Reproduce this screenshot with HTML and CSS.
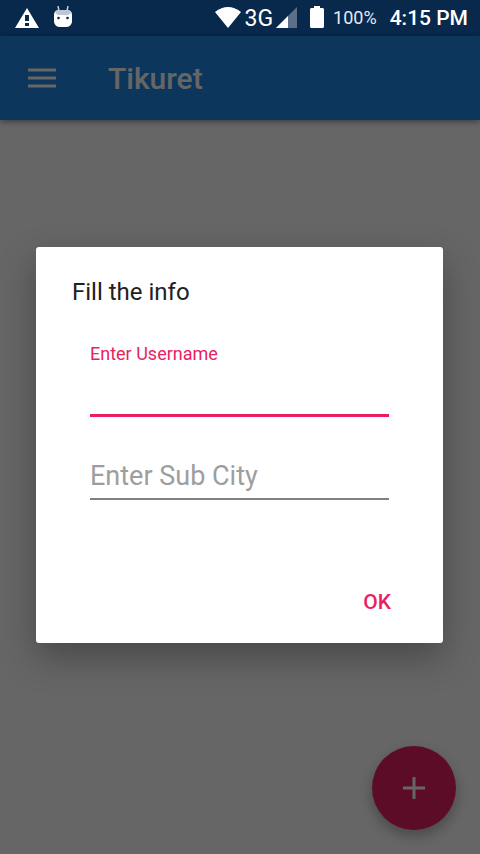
FILE: index.html
```html
<!DOCTYPE html>
<html lang="en">
<head>
<meta charset="utf-8">
<meta name="viewport" content="width=device-width, initial-scale=1">
<title>Tikuret</title>
<link rel="stylesheet" href="styles.css">
</head>
<body>
<div class="screen">
  <header class="status">
    <svg class="status-warning" width="24" height="20" viewBox="0 0 24 20" aria-hidden="true"><path fill="#fff" fill-rule="evenodd" d="M12 0 24 20H0ZM10 7v6h4V7ZM10 15v3h4v-3Z"/></svg>
    <svg class="status-robot" width="18" height="22" viewBox="0 0 18 22" aria-hidden="true"><path stroke="#c5cddb" stroke-width="1.500" d="M4 0 5 5M14 0 13 5"/><path fill="#fff" d="M0 9Q0 4 5 4H13Q18 4 18 9V16Q17 21 12 21H6Q1 21 0 16Z"/><path fill="#bdc6d6" d="M1 7Q2 4 5 4H13Q16 4 17 7L14 9H4Z"/><circle cx="4.500" cy="12" r="1.300" fill="#08284c"/><circle cx="13.500" cy="12" r="1.300" fill="#08284c"/></svg>
    <svg class="status-wifi" width="26" height="21" viewBox="0 0 26 21" aria-hidden="true"><path fill="#fff" d="M0 5Q13-5 26 5L13 21Z"/></svg>
    <span class="network">3G</span>
    <svg class="status-signal" width="21" height="21" viewBox="0 0 21 21" aria-hidden="true"><path fill="#5b6f89" d="M21 0V21H0Z"/><path fill="#fff" d="M12 9V21H0Z"/></svg>
    <svg class="status-battery" width="14" height="22" viewBox="0 0 14 22" aria-hidden="true"><path fill="#fff" d="M4 0H10V2H13L14 3V21L13 22H1L0 21V3L1 2H4Z"/></svg>
    <span class="percent">100%</span>
    <time class="clock">4:15 PM</time>
  </header>
  <div class="app">
    <header class="toolbar">
      <button class="menu" type="button" aria-label="Open menu"><svg width="28" height="21" viewBox="0 0 28 21"><path stroke="#fff" stroke-width="3" d="M0 2H28M0 10H28M0 18H28"/></svg></button>
      <h1 class="title">Tikuret</h1>
    </header>
    <main class="content">
      <button class="fab" type="button" aria-label="Add"><svg width="22" height="22" viewBox="0 0 22 22"><path stroke="#fff" stroke-width="3" d="M0 11H22M11 0V22"/></svg></button>
    </main>
    <div class="scrim">
      <form class="dialog" role="dialog" aria-labelledby="dialog-title">
        <h2 class="dialog-title" id="dialog-title">Fill the info</h2>
        <div class="fields">
          <label class="label" for="username">Enter Username</label>
          <input class="input input-active" id="username" type="text">
          <input class="input" id="subcity" type="text" placeholder="Enter Sub City" aria-label="Enter Sub City">
        </div>
        <div class="actions"><button class="ok" type="button">OK</button></div>
      </form>
    </div>
  </div>
</div>
</body>
</html>
```
FILE: styles.css
```css
* {
  box-sizing: border-box;
}

body {
  margin: 0;
  font-family: Roboto, "Liberation Sans", sans-serif;
}

button {
  border: 0;
  padding: 0;
  background: none;
  font: inherit;
}

svg {
  display: block;
  flex: none;
}

.screen {
  display: flex;
  flex-direction: column;
  min-height: 100vh;
}

.status {
  display: flex;
  align-items: center;
  height: 36px;
  padding: 0 12px 0 15px;
  background: #08284c;
  color: #fff;
  white-space: nowrap;
}

.status-robot {
  margin-left: 15px;
  margin-bottom: 3px;
}

.status-wifi,
.status-signal,
.status-battery {
  margin-bottom: 2px;
}

.status-wifi {
  margin-left: auto;
}

.network {
  margin: 0 3px 0 4px;
  font-size: 23px;
}

.status-battery {
  margin-right: 9px;
  margin-left: 13px;
}

.percent {
  margin-right: 13px;
  font-size: 18px;
  line-height: 24px;
  color: #e6eaef;
}

.clock {
  font-size: 21px;
  font-weight: 500;
  line-height: 26px;
}

.app {
  position: relative;
  flex: 1;
  display: flex;
  flex-direction: column;
}

.toolbar {
  display: flex;
  align-items: center;
  gap: 52px;
  height: 84px;
  padding: 0 28px;
  background: #1e88e5;
  box-shadow: 0 2px 6px rgba(0, 0, 0, 0.4);
  color: #fff;
}

.title {
  margin: 0;
  font-size: 30px;
  font-weight: 500;
}

.content {
  flex: 1;
  display: flex;
  align-items: flex-end;
  justify-content: flex-end;
  padding: 24px;
}

.fab {
  display: flex;
  align-items: center;
  justify-content: center;
  width: 84px;
  height: 84px;
  border-radius: 50%;
  background: #e91e63;
  box-shadow: 0 6px 14px rgba(0, 0, 0, 0.3);
}

.scrim {
  position: absolute;
  inset: 0;
  display: flex;
  align-items: center;
  padding: 0 37px 0 36px;
  background: rgba(0, 0, 0, 0.6);
}

.dialog {
  flex: 1;
  min-width: 0;
  padding: 27px 36px 14px;
  border-radius: 3px;
  background: #fff;
  box-shadow: 0 14px 36px rgba(0, 0, 0, 0.3);
}

.dialog-title {
  margin: 0 0 30px;
  font-size: 24px;
  font-weight: 400;
  line-height: 36px;
  color: #212121;
}

.fields {
  display: flex;
  flex-direction: column;
  padding: 0 18px;
}

.label {
  margin-bottom: 12px;
  font-size: 18px;
  line-height: 27px;
  color: #e91e63;
}

.input {
  width: 100%;
  height: 46px;
  border: 0;
  border-bottom: 2px solid #808080;
  border-radius: 0;
  padding: 0;
  outline: 0;
  background: none;
  font: 27px Roboto, "Liberation Sans", sans-serif;
  color: #212121;
}

.input::placeholder {
  color: #9e9e9e;
  opacity: 1;
}

.input-active {
  height: 38px;
  margin-bottom: 37px;
  border-bottom: 3px solid #e91e63;
}

.actions {
  display: flex;
  justify-content: flex-end;
  margin-top: 75px;
}

.ok {
  padding: 0 16px;
  font-size: 21px;
  font-weight: 500;
  line-height: 54px;
  color: #e91e63;
}
```
